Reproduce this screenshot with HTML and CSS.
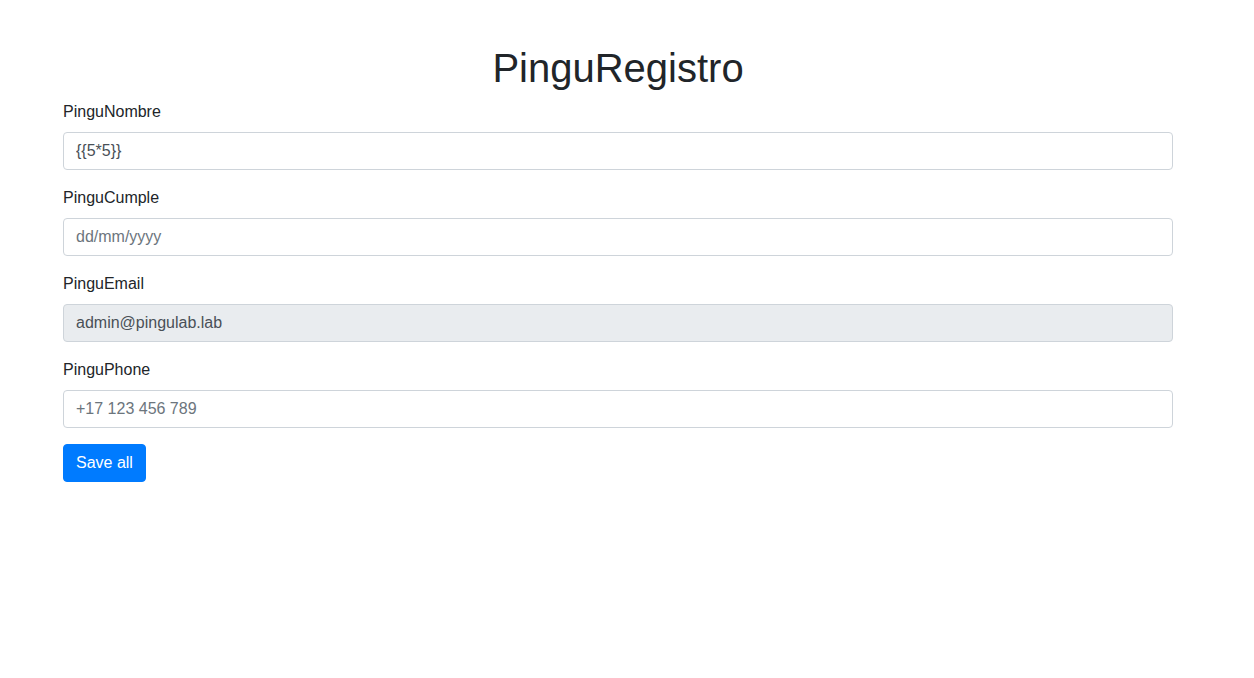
FILE: index.html
```html
<!DOCTYPE html>
<html lang="es">
<head>
<meta charset="utf-8">
<title>PinguRegistro</title>
<link rel="stylesheet" href="styles.css">
</head>
<body>
<div class="container">
  <h1 class="title">PinguRegistro</h1>
  <form class="form">
    <div class="form-group">
      <label class="label" for="nombre">PinguNombre</label>
      <input class="form-control" id="nombre" type="text" value="{{5*5}}">
    </div>
    <div class="form-group">
      <label class="label" for="cumple">PinguCumple</label>
      <input class="form-control" id="cumple" type="text" placeholder="dd/mm/yyyy">
    </div>
    <div class="form-group">
      <label class="label" for="email">PinguEmail</label>
      <input class="form-control" id="email" type="text" value="admin@pingulab.lab" readonly>
    </div>
    <div class="form-group">
      <label class="label" for="phone">PinguPhone</label>
      <input class="form-control" id="phone" type="text" placeholder="+17 123 456 789">
    </div>
    <button class="btn-primary" type="button">Save all</button>
  </form>
</div>
</body>
</html>
```
FILE: styles.css
```css
* { box-sizing: border-box; }
html, body { margin: 0; padding: 0; }
body {
  font-family: "Liberation Sans", Arial, sans-serif;
  font-size: 16px;
  line-height: 1.5;
  color: #212529;
  background: #fff;
}
.container {
  width: 1140px;
  padding: 44px 15px 0;
  margin-left: 48px;
}
.title {
  margin: 0 0 8px;
  font-size: 40px;
  font-weight: 500;
  line-height: 1.2;
  text-align: center;
}
.form { margin: 0; }
.form-group { margin-bottom: 16px; }
.label {
  display: block;
  margin-bottom: 8px;
}
.form-control {
  display: block;
  width: 100%;
  height: 38px;
  padding: 6px 12px;
  font-family: inherit;
  font-size: 16px;
  line-height: 1.5;
  color: #495057;
  background: #fff;
  border: 1px solid #ced4da;
  border-radius: 4px;
  outline: none;
}
.form-control::placeholder { color: #6c757d; opacity: 1; }
.form-control[readonly] { background: #e9ecef; }
.btn-primary {
  display: inline-block;
  padding: 6px 12px;
  font-family: inherit;
  font-size: 16px;
  line-height: 1.5;
  color: #fff;
  background: #007bff;
  border: 1px solid #007bff;
  border-radius: 4px;
  cursor: pointer;
}
```
